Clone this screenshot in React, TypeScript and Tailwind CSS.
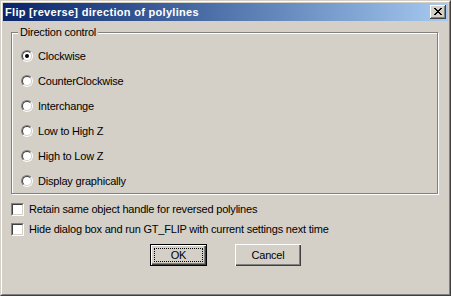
import React from 'react';

const font = { fontFamily: '"Liberation Sans", Arial, sans-serif' };

function Radio({ checked }: { checked?: boolean }) {
  return (
    <span className="flex h-[12px] w-[12px] shrink-0 rounded-full border border-t-[#808080] border-l-[#808080] border-r-white border-b-white">
      <span className="flex h-full w-full items-center justify-center rounded-full border border-t-[#404040] border-l-[#404040] border-r-[#d4d0c8] border-b-[#d4d0c8] bg-white">
        {checked && <span className="h-[4px] w-[4px] rounded-full bg-black" />}
      </span>
    </span>
  );
}

function Checkbox() {
  return (
    <span className="flex h-[13px] w-[13px] shrink-0 border border-t-[#808080] border-l-[#808080] border-r-white border-b-white">
      <span className="h-full w-full border border-t-[#404040] border-l-[#404040] border-r-[#d4d0c8] border-b-[#d4d0c8] bg-white" />
    </span>
  );
}

const options = [
  'Clockwise',
  'CounterClockwise',
  'Interchange',
  'Low to High Z',
  'High to Low Z',
  'Display graphically',
];

export default function App() {
  return (
    <div
      className="h-[296px] w-[451px] border border-t-[#d4d0c8] border-l-[#d4d0c8] border-r-[#404040] border-b-[#404040] bg-[#d4d0c8] text-[11px] tracking-[-0.2px] text-black"
      style={font}
    >
      <div className="flex h-full w-full flex-col border border-t-white border-l-white border-r-[#808080] border-b-[#808080] p-[1px]">
        {/* Title bar */}
        <div className="flex h-[18px] shrink-0 items-center justify-between bg-gradient-to-r from-[#0a246a] to-[#a6caf0]">
          <span className="pl-[2px] text-[11px] font-bold leading-[18px] tracking-[0.3px] text-white">
            Flip [reverse] direction of polylines
          </span>
          <button className="mr-[2px] flex h-[14px] w-[16px] items-center justify-center bg-[#d4d0c8] shadow-[inset_-1px_-1px_0_#404040,inset_1px_1px_0_#fff,inset_-2px_-2px_0_#808080]">
            <svg width="8" height="7" viewBox="0 0 8 7" shapeRendering="crispEdges" className="-mt-px">
              <path
                fill="#000"
                d="M0 0h2v1H0zM6 0h2v1H6zM1 1h2v1H1zM5 1h2v1H5zM2 2h4v1H2zM3 3h2v1H3zM2 4h4v1H2zM1 5h2v1H1zM5 5h2v1H5zM0 6h2v1H0zM6 6h2v1H6z"
              />
            </svg>
          </button>
        </div>

        {/* Direction control group */}
        <div className="relative ml-[8px] mt-[11px] h-[162px] w-[427px] border border-[#808080] shadow-[inset_1px_1px_0_#fff,1px_1px_0_#fff]">
          <span className="absolute left-[6px] top-[-7px] bg-[#d4d0c8] px-[2px] leading-[13px]">
            Direction control
          </span>
          <div className="flex flex-col gap-[13px] pl-[9px] pt-[17px]">
            {options.map((o, i) => (
              <div key={o} className="flex h-[12px] items-center gap-[5px] leading-[12px]">
                <Radio checked={i === 0} />
                <span>{o}</span>
              </div>
            ))}
          </div>
        </div>

        {/* Checkboxes */}
        <div className="ml-[8px] mt-[9px] flex flex-col gap-[7px]">
          <div className="flex h-[13px] items-center gap-[5px] leading-[13px]">
            <Checkbox />
            <span>Retain same object handle for reversed polylines</span>
          </div>
          <div className="flex h-[13px] items-center gap-[5px] leading-[13px]">
            <Checkbox />
            <span>Hide dialog box and run GT_FLIP with current settings next time</span>
          </div>
        </div>

        {/* Buttons */}
        <div className="mt-[8px] flex justify-center gap-[28px]">
          <button className="h-[22px] w-[57px] border border-black bg-[#d4d0c8]">
            <div className="flex h-full w-full p-[3px] shadow-[inset_1px_1px_0_#fff,inset_-1px_-1px_0_#404040,inset_-2px_-2px_0_#808080]">
              <div className="flex flex-1 items-center justify-center border border-dotted border-black leading-[12px]">
                OK
              </div>
            </div>
          </button>
          <button className="flex h-[22px] w-[66px] items-center justify-center bg-[#d4d0c8] leading-[13px] shadow-[inset_1px_1px_0_#fff,inset_-1px_-1px_0_#404040,inset_-2px_-2px_0_#808080]">
            Cancel
          </button>
        </div>
      </div>
    </div>
  );
}
